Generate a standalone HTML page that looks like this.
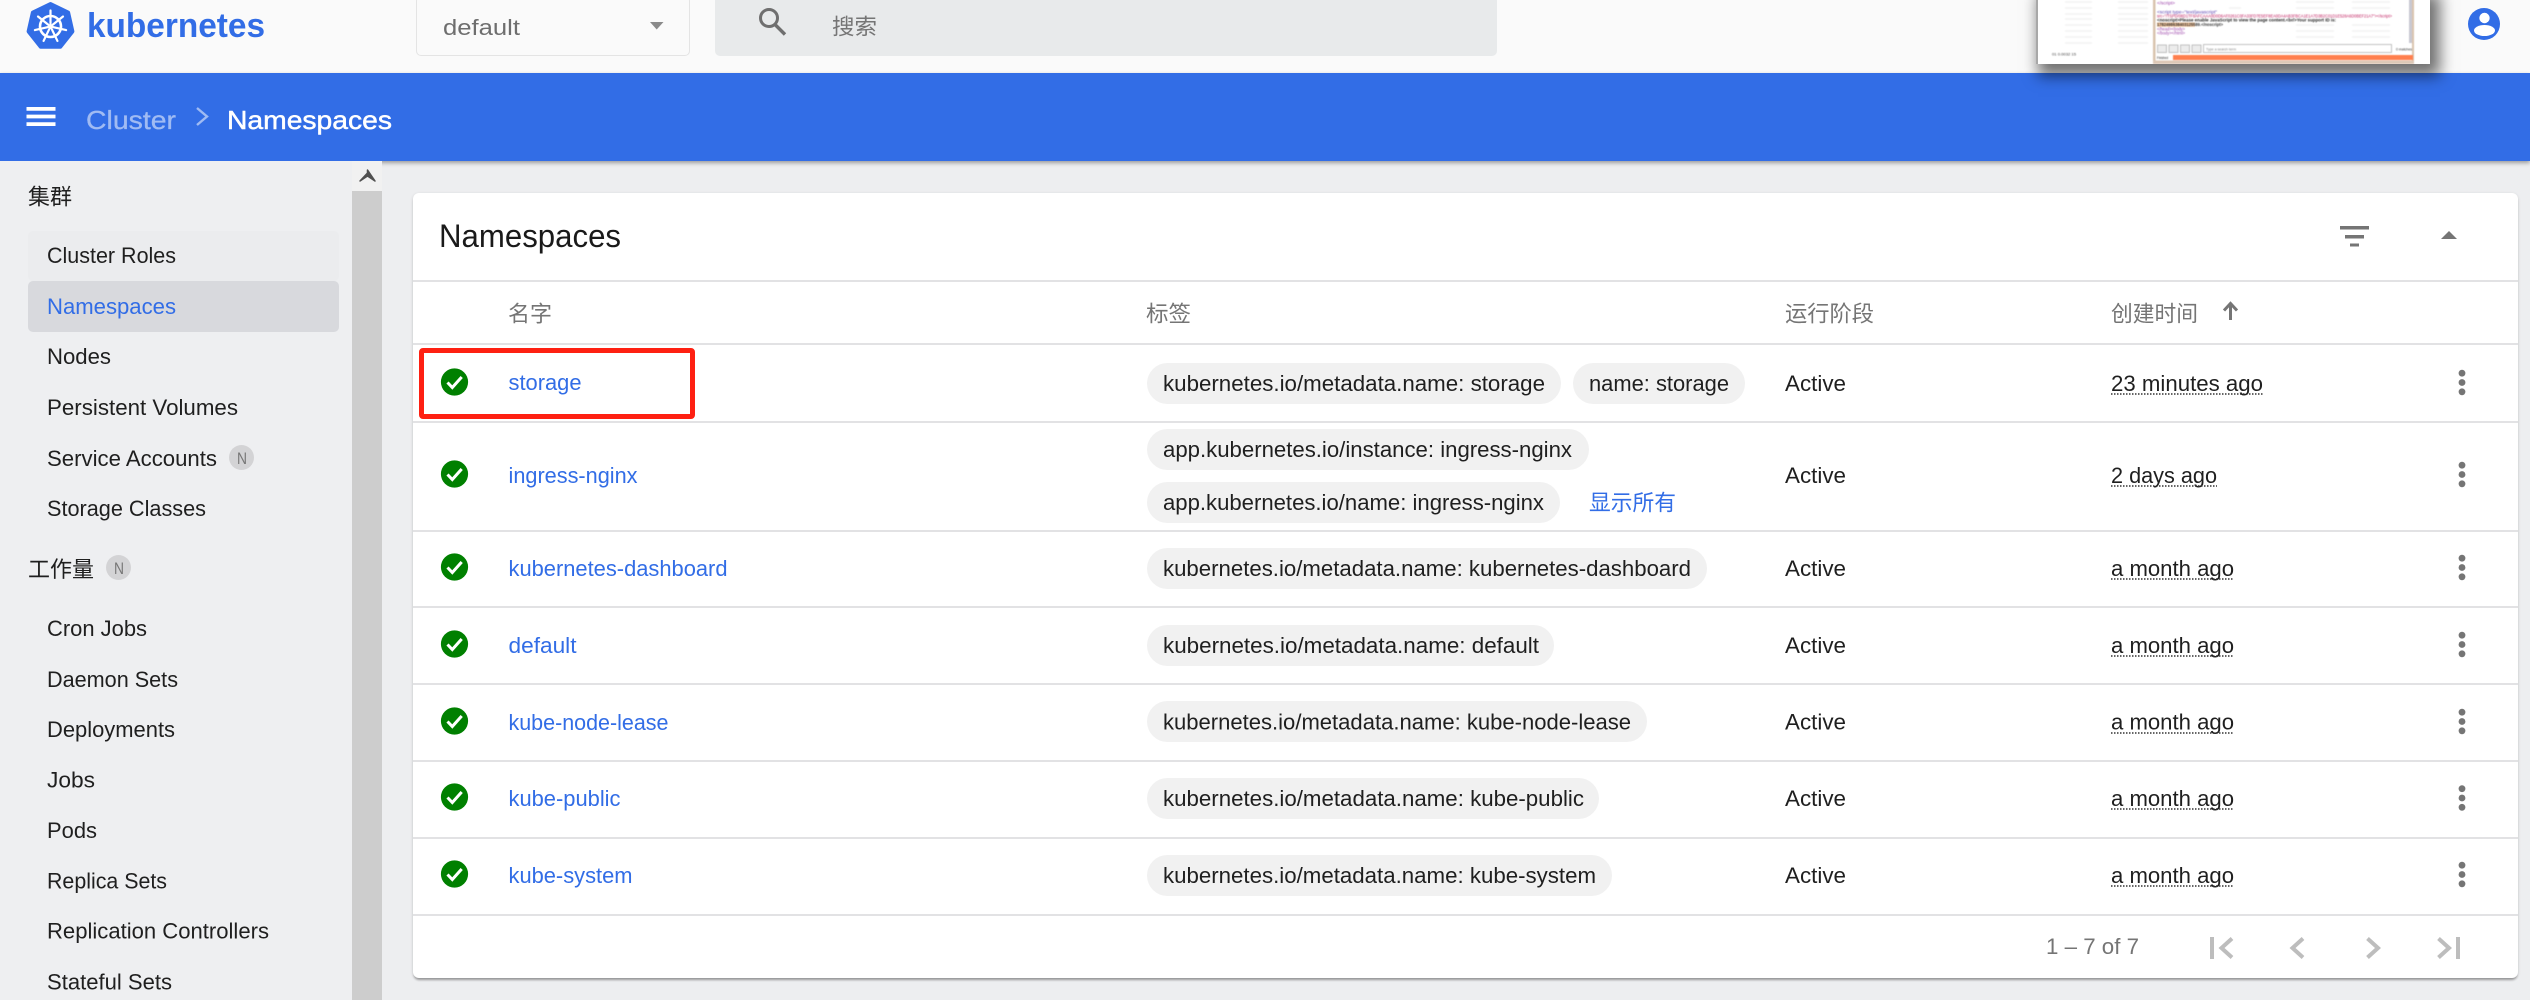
<!DOCTYPE html>
<html lang="zh">
<head>
<meta charset="utf-8">
<title>Namespaces - Kubernetes Dashboard</title>
<style>
html,body{margin:0;padding:0;width:2530px;height:1000px;overflow:hidden;background:#edeef0;font-family:"Liberation Sans","Noto Sans CJK SC",sans-serif}
.a{position:absolute;box-sizing:border-box}
svg.t{position:absolute;left:0;top:0;width:2530px;height:1000px;z-index:5;pointer-events:none}
svg text{font-family:"Liberation Sans","Noto Sans CJK SC",sans-serif;font-size:22.4px;fill:#1f1f1f}
.l{fill:#326de6}
.g{fill:#757575}
.line{left:413px;width:2105px;height:2px;background:#e2e2e4}
.chip{background:#f1f1f1;border-radius:21px;height:41px}
</style>
</head>
<body>
<!-- toolbar -->
<div class="a" style="left:0;top:0;width:2530px;height:73px;background:#fafafa"></div>
<div class="a" style="left:416px;top:-4px;width:274px;height:60px;border:1.5px solid #e4e4e4;border-radius:5px;background:#fafafa"></div>
<div class="a" style="left:715px;top:-4px;width:782px;height:60px;background:#e8eaeb;border-radius:5px"></div>
<!-- blue bar -->
<div class="a" style="left:0;top:73px;width:2530px;height:88px;background:#326de6;box-shadow:0 2px 4px rgba(0,0,0,.35)"></div>
<!-- sidebar -->
<div class="a" style="left:0;top:161px;width:352px;height:839px;background:#eeeff1"></div>
<div class="a" style="left:28px;top:231px;width:311px;height:50px;background:#ebecee;border-radius:5px"></div>
<div class="a" style="left:28px;top:281px;width:311px;height:51px;background:#d8d9dd;border-radius:5px"></div>
<div class="a" style="left:229px;top:445px;width:25px;height:25px;background:#d3d3d5;border-radius:50%"></div>
<div class="a" style="left:106px;top:555px;width:25px;height:25px;background:#d3d3d5;border-radius:50%"></div>
<!-- scrollbar -->
<div class="a" style="left:352px;top:161px;width:30px;height:839px;background:#cdcdcd"></div>
<div class="a" style="left:352px;top:161px;width:30px;height:30px;background:#f1f1f1"></div>
<!-- card -->
<div class="a" style="left:413px;top:193px;width:2105px;height:785px;background:#fff;border-radius:6px;box-shadow:0 3px 2px -1px rgba(0,0,0,.3),0 1px 3px rgba(0,0,0,.14)"></div>
<div class="a line" style="top:280px"></div>
<div class="a line" style="top:343px"></div>
<div class="a line" style="top:421px"></div>
<div class="a line" style="top:530px"></div>
<div class="a line" style="top:606px"></div>
<div class="a line" style="top:683px"></div>
<div class="a line" style="top:760px"></div>
<div class="a line" style="top:837px"></div>
<div class="a line" style="top:914px"></div>
<!-- chips -->
<div class="a chip" style="left:1147px;top:363px;width:414px"></div>
<div class="a chip" style="left:1573px;top:363px;width:172px"></div>
<div class="a chip" style="left:1147px;top:429px;width:442px"></div>
<div class="a chip" style="left:1147px;top:482px;width:413px"></div>
<div class="a chip" style="left:1147px;top:548px;width:560px"></div>
<div class="a chip" style="left:1147px;top:625px;width:407px"></div>
<div class="a chip" style="left:1147px;top:701px;width:500px"></div>
<div class="a chip" style="left:1147px;top:778px;width:452px"></div>
<div class="a chip" style="left:1147px;top:855px;width:465px"></div>
<!-- highlight -->
<div class="a" style="left:419px;top:348px;width:276px;height:71px;border:5px solid #fe2012;border-radius:4px;z-index:6"></div>

<!-- pasted thumbnail -->
<div class="a" style="left:2036px;top:-10px;width:394px;height:74px;background:#fff;border-left:2px solid #a8a8a8;box-shadow:6px 8px 14px 4px rgba(0,0,0,.55);z-index:7;overflow:hidden">
<svg width="394" height="74" viewBox="2036 -10 394 74" style="position:absolute;left:-2px;top:0;filter:blur(.5px)">
<g fill="#f5f5f5">
<rect x="2065" y="1" width="27" height="2"/><rect x="2065" y="7" width="27" height="2"/><rect x="2065" y="13" width="27" height="2"/><rect x="2065" y="18" width="27" height="2"/><rect x="2065" y="24" width="27" height="2"/><rect x="2065" y="30" width="27" height="2"/><rect x="2065" y="36" width="27" height="2"/><rect x="2065" y="42" width="27" height="2"/>
<rect x="2118" y="1" width="30" height="2"/><rect x="2118" y="7" width="30" height="2"/><rect x="2118" y="13" width="30" height="2"/><rect x="2118" y="18" width="30" height="2"/><rect x="2118" y="24" width="30" height="2"/><rect x="2118" y="30" width="30" height="2"/><rect x="2118" y="36" width="30" height="2"/><rect x="2118" y="42" width="30" height="2"/>
<rect x="2229" y="7" width="12" height="2"/><rect x="2296" y="7" width="38" height="2"/><rect x="2352" y="7" width="38" height="2"/>
<rect x="2296" y="24" width="38" height="2"/><rect x="2352" y="24" width="38" height="2"/>
<rect x="2296" y="30" width="38" height="2"/><rect x="2352" y="30" width="38" height="2"/>
<rect x="2296" y="36" width="38" height="2"/><rect x="2352" y="36" width="38" height="2"/>
<rect x="2296" y="1" width="38" height="2"/><rect x="2352" y="1" width="38" height="2"/>
</g>
<text x="2052" y="55.5" style="font-size:4px;fill:#444" textLength="24" lengthAdjust="spacingAndGlyphs">01 0.0032 15</text>
<rect x="2153" y="-10" width="2.5" height="74" fill="#d9c3ae"/>
<rect x="2412" y="-10" width="2" height="74" fill="#d9c3ae"/>
<rect x="2409" y="-10" width="3" height="53" fill="#c8c8d2"/>
<rect x="2153" y="60.5" width="261" height="3.5" fill="#dcc8b6"/>
<rect x="2157" y="22.5" width="38" height="4.2" fill="#f7c79c"/>
<text x="2157" y="4.5" style="font-size:4.2px;fill:#9a3fa8" textLength="18" lengthAdjust="spacingAndGlyphs">&lt;/script&gt;</text>
<text x="2157" y="13.5" style="font-size:4.2px;fill:#5a3fb0" textLength="60" lengthAdjust="spacingAndGlyphs">&lt;script type="text/javascript"</text>
<text x="2157" y="17.5" style="font-size:4.2px;fill:#c02060" textLength="235" lengthAdjust="spacingAndGlyphs">src="/TSPD/08D1TF8AFCAAA0D0D6AF0261C0FA33FD7E5EF8EA0DA4AB3FBCA1E1A7D3B2C01D1E528A6D0BEF21A7"&gt;&lt;/script&gt;</text>
<text x="2157" y="21.5" style="font-size:4.2px;fill:#222;font-weight:bold" textLength="179" lengthAdjust="spacingAndGlyphs">&lt;noscript&gt;Please enable JavaScript to view the page content.&lt;br/&gt;Your support ID is:</text>
<text x="2157" y="26" style="font-size:4.2px;fill:#333;font-weight:bold" textLength="66" lengthAdjust="spacingAndGlyphs">1782498638403125589.&lt;/noscript&gt;</text>
<text x="2157" y="30.500" style="font-size:4.2px;fill:#9a3fa8" textLength="28" lengthAdjust="spacingAndGlyphs">&lt;/head&gt;&lt;body&gt;</text>
<text x="2157" y="34.500" style="font-size:4.2px;fill:#9a3fa8" textLength="28" lengthAdjust="spacingAndGlyphs">&lt;/body&gt;&lt;/html&gt;</text>
<g fill="#ececec" stroke="#b5b5b5" stroke-width=".8">
<rect x="2157.5" y="45" width="9" height="7.5"/><rect x="2169" y="45" width="9" height="7.5"/><rect x="2180.5" y="45" width="9" height="7.5"/><rect x="2192" y="45" width="9" height="7.5"/>
<rect x="2203.5" y="44.5" width="188" height="8" fill="#fff"/>
</g>
<text x="2206" y="50.5" style="font-size:3.6px;fill:#888" textLength="30" lengthAdjust="spacingAndGlyphs">Type a search term</text>
<text x="2396" y="50.5" style="font-size:3.8px;fill:#333" textLength="16" lengthAdjust="spacingAndGlyphs">0 matches</text>
<text x="2157" y="59" style="font-size:4px;fill:#222" textLength="11" lengthAdjust="spacingAndGlyphs">Finished</text>
<rect x="2173" y="55" width="240" height="5" fill="#ff7f4e"/>
</svg>
</div>

<svg class="t" viewBox="0 0 2530 1000" xmlns="http://www.w3.org/2000/svg">
<!-- logo -->
<path d="M50.5 4 L68.1 12.5 L72.4 31.5 L60.3 46.7 L40.7 46.7 L28.6 31.5 L32.9 12.5 Z" fill="#326de6" stroke="#326de6" stroke-width="4" stroke-linejoin="round"/>
<g fill="none" stroke="#fff" transform="translate(50.5 26.5)">
<circle r="10.5" stroke-width="2.6"/>
<circle r="2.6" fill="#fff" stroke="none"/>
<g stroke-width="2.2" stroke-linecap="round">
<path d="M0 -16V-3"/><path d="M0 -16V-3" transform="rotate(51.4)"/><path d="M0 -16V-3" transform="rotate(102.9)"/><path d="M0 -16V-3" transform="rotate(154.3)"/><path d="M0 -16V-3" transform="rotate(205.7)"/><path d="M0 -16V-3" transform="rotate(257.1)"/><path d="M0 -16V-3" transform="rotate(308.6)"/>
</g>
</g>
<text x="87" y="37" style="font-size:34px;fill:#326de6;font-weight:bold" textLength="178" lengthAdjust="spacingAndGlyphs">kubernetes</text>
<text x="443" y="35" style="fill:#6e6e6e" textLength="77" lengthAdjust="spacingAndGlyphs">default</text>
<path d="M650 22H663.5L656.7 29.5Z" fill="#8a8a8a"/>
<circle cx="769" cy="18" r="8.5" fill="none" stroke="#6f6f6f" stroke-width="3"/><path d="M775 24.5L785 34.5" stroke="#6f6f6f" stroke-width="3.4"/>
<text x="832" y="34.5" style="fill:#757575" textLength="45" lengthAdjust="spacingAndGlyphs">搜索</text>

<!-- blue bar -->
<path d="M26.5 107H55.5V110.8H26.5ZM26.5 114.6H55.5V118.4H26.5ZM26.5 122.2H55.5V126H26.5Z" fill="#fff"/>
<text x="86" y="129" style="font-size:25.6px;fill:#a0bbf3" stroke="#a0bbf3" stroke-width=".3" textLength="90" lengthAdjust="spacingAndGlyphs">Cluster</text>
<path d="M197 108L207 116.5L197 125" fill="none" stroke="#a0bbf3" stroke-width="2.4"/>
<text x="227" y="129" style="font-size:25.6px;fill:#fff" stroke="#fff" stroke-width=".45" textLength="165" lengthAdjust="spacingAndGlyphs">Namespaces</text>

<!-- scroll arrow -->
<path d="M360 181L367.5 173V170L375 181L367.5 176Z" fill="#505050" stroke="#505050" stroke-width="1.5" stroke-linejoin="round"/>

<!-- sidebar -->
<text x="28" y="204.500" textLength="44" lengthAdjust="spacingAndGlyphs">集群</text>
<text x="47" y="263" textLength="129" lengthAdjust="spacingAndGlyphs">Cluster Roles</text>
<text x="47" y="314" class="l" textLength="129" lengthAdjust="spacingAndGlyphs">Namespaces</text>
<text x="47" y="364" textLength="64" lengthAdjust="spacingAndGlyphs">Nodes</text>
<text x="47" y="415" textLength="191" lengthAdjust="spacingAndGlyphs">Persistent Volumes</text>
<text x="47" y="466" textLength="170" lengthAdjust="spacingAndGlyphs">Service Accounts</text>
<text x="237" y="464" style="font-size:17px;fill:#777" textLength="10" lengthAdjust="spacingAndGlyphs">N</text>
<text x="47" y="516" textLength="159" lengthAdjust="spacingAndGlyphs">Storage Classes</text>
<text x="28" y="577" textLength="66" lengthAdjust="spacingAndGlyphs">工作量</text>
<text x="114" y="574" style="font-size:17px;fill:#777" textLength="10" lengthAdjust="spacingAndGlyphs">N</text>
<text x="47" y="636" textLength="100" lengthAdjust="spacingAndGlyphs">Cron Jobs</text>
<text x="47" y="687" textLength="131" lengthAdjust="spacingAndGlyphs">Daemon Sets</text>
<text x="47" y="737" textLength="128" lengthAdjust="spacingAndGlyphs">Deployments</text>
<text x="47" y="787.500" textLength="48" lengthAdjust="spacingAndGlyphs">Jobs</text>
<text x="47" y="838" textLength="50" lengthAdjust="spacingAndGlyphs">Pods</text>
<text x="47" y="888.500" textLength="120" lengthAdjust="spacingAndGlyphs">Replica Sets</text>
<text x="47" y="938.500" textLength="222" lengthAdjust="spacingAndGlyphs">Replication Controllers</text>
<text x="47" y="989.500" textLength="125" lengthAdjust="spacingAndGlyphs">Stateful Sets</text>

<!-- avatar -->
<circle cx="2484" cy="24" r="16" fill="#326de6"/>
<circle cx="2484.5" cy="18" r="5.2" fill="#fff"/>
<ellipse cx="2484.5" cy="30.5" rx="10.5" ry="5.5" fill="#fff"/>

<!-- card header -->
<text x="439" y="247" style="font-size:32px;fill:#1a1a1a" textLength="182" lengthAdjust="spacingAndGlyphs">Namespaces</text>
<path d="M2340 226H2369V229.5H2340ZM2345 235H2364V238.5H2345ZM2350 243.5H2359V246.5H2350Z" fill="#757575"/>
<path d="M2441 239L2449 231L2457 239Z" fill="#757575"/>

<!-- table head -->
<text x="508" y="321.500" class="g" textLength="44" lengthAdjust="spacingAndGlyphs">名字</text>
<text x="1146" y="321.500" class="g" textLength="45" lengthAdjust="spacingAndGlyphs">标签</text>
<text x="1785" y="321.500" class="g" textLength="89" lengthAdjust="spacingAndGlyphs">运行阶段</text>
<text x="2111" y="321.500" class="g" textLength="87" lengthAdjust="spacingAndGlyphs">创建时间</text>
<path d="M2230.5 320V305M2224 310.5L2230.5 303.5L2237 310.5" fill="none" stroke="#757575" stroke-width="3"/>

<!-- row status icons -->
<defs><g id="ok"><circle r="13.6" fill="#008000"/><path d="M-7 0.5L-2.2 5.5L7.2 -5" fill="none" stroke="#fff" stroke-width="3"/></g>
<g id="kb"><circle cy="-9.3" r="3.4" fill="#757575"/><circle r="3.4" fill="#757575"/><circle cy="9.3" r="3.4" fill="#757575"/></g></defs>
<use href="#ok" x="454.500" y="382"/><use href="#ok" x="454.500" y="474"/><use href="#ok" x="454.500" y="567"/><use href="#ok" x="454.500" y="644"/><use href="#ok" x="454.500" y="721"/><use href="#ok" x="454.500" y="797"/><use href="#ok" x="454.500" y="874"/>
<use href="#kb" x="2462" y="382.500"/><use href="#kb" x="2462" y="474.500"/><use href="#kb" x="2462" y="567.500"/><use href="#kb" x="2462" y="644.500"/><use href="#kb" x="2462" y="721.500"/><use href="#kb" x="2462" y="798"/><use href="#kb" x="2462" y="874.500"/>

<!-- names -->
<text x="508.500" y="390" class="l" textLength="73" lengthAdjust="spacingAndGlyphs">storage</text>
<text x="508.500" y="483" class="l" textLength="129" lengthAdjust="spacingAndGlyphs">ingress-nginx</text>
<text x="508.500" y="576" class="l" textLength="219" lengthAdjust="spacingAndGlyphs">kubernetes-dashboard</text>
<text x="508.500" y="653" class="l" textLength="68" lengthAdjust="spacingAndGlyphs">default</text>
<text x="508.500" y="730" class="l" textLength="160" lengthAdjust="spacingAndGlyphs">kube-node-lease</text>
<text x="508.500" y="806" class="l" textLength="112" lengthAdjust="spacingAndGlyphs">kube-public</text>
<text x="508.500" y="883" class="l" textLength="124" lengthAdjust="spacingAndGlyphs">kube-system</text>

<!-- labels -->
<text x="1163" y="391" textLength="382" lengthAdjust="spacingAndGlyphs">kubernetes.io/metadata.name: storage</text>
<text x="1589" y="391" textLength="140" lengthAdjust="spacingAndGlyphs">name: storage</text>
<text x="1163" y="457" textLength="409" lengthAdjust="spacingAndGlyphs">app.kubernetes.io/instance: ingress-nginx</text>
<text x="1163" y="510" textLength="381" lengthAdjust="spacingAndGlyphs">app.kubernetes.io/name: ingress-nginx</text>
<text x="1589" y="510.500" class="l" textLength="87" lengthAdjust="spacingAndGlyphs">显示所有</text>
<text x="1163" y="576" textLength="528" lengthAdjust="spacingAndGlyphs">kubernetes.io/metadata.name: kubernetes-dashboard</text>
<text x="1163" y="653" textLength="376" lengthAdjust="spacingAndGlyphs">kubernetes.io/metadata.name: default</text>
<text x="1163" y="729.500" textLength="468" lengthAdjust="spacingAndGlyphs">kubernetes.io/metadata.name: kube-node-lease</text>
<text x="1163" y="806" textLength="421" lengthAdjust="spacingAndGlyphs">kubernetes.io/metadata.name: kube-public</text>
<text x="1163" y="883" textLength="433" lengthAdjust="spacingAndGlyphs">kubernetes.io/metadata.name: kube-system</text>

<!-- phase -->
<text x="1785" y="391" textLength="61" lengthAdjust="spacingAndGlyphs">Active</text>
<text x="1785" y="483" textLength="61" lengthAdjust="spacingAndGlyphs">Active</text>
<text x="1785" y="576" textLength="61" lengthAdjust="spacingAndGlyphs">Active</text>
<text x="1785" y="653" textLength="61" lengthAdjust="spacingAndGlyphs">Active</text>
<text x="1785" y="729.500" textLength="61" lengthAdjust="spacingAndGlyphs">Active</text>
<text x="1785" y="806" textLength="61" lengthAdjust="spacingAndGlyphs">Active</text>
<text x="1785" y="883" textLength="61" lengthAdjust="spacingAndGlyphs">Active</text>

<!-- created -->
<text x="2111" y="391" textLength="152" lengthAdjust="spacingAndGlyphs">23 minutes ago</text>
<text x="2111" y="483" textLength="106" lengthAdjust="spacingAndGlyphs">2 days ago</text>
<text x="2111" y="576" textLength="123" lengthAdjust="spacingAndGlyphs">a month ago</text>
<text x="2111" y="653" textLength="123" lengthAdjust="spacingAndGlyphs">a month ago</text>
<text x="2111" y="729.500" textLength="123" lengthAdjust="spacingAndGlyphs">a month ago</text>
<text x="2111" y="806" textLength="123" lengthAdjust="spacingAndGlyphs">a month ago</text>
<text x="2111" y="883" textLength="123" lengthAdjust="spacingAndGlyphs">a month ago</text>
<g stroke="#333" stroke-width="1.5" stroke-dasharray="1.5 1.5" fill="none">
<path d="M2111 394H2263M2111 486H2217M2111 579H2234M2111 656H2234M2111 733H2234M2111 809H2234M2111 886H2234"/>
</g>

<!-- paginator -->
<text x="2046" y="954" class="g" textLength="93" lengthAdjust="spacingAndGlyphs">1 – 7 of 7</text>
<g fill="none" stroke="#bdbdbd" stroke-width="4">
<path d="M2212 937V959"/><path d="M2232 938.5L2221.5 948L2232 957.5"/>
<path d="M2303 938.5L2292.500 948L2303 957.5"/>
<path d="M2367.500 938.500L2378 948L2367.500 957.500"/>
<path d="M2438.500 938.500L2449 948L2438.500 957.500"/><path d="M2458 937V959"/>
</g>
</svg>
</body>
</html>
